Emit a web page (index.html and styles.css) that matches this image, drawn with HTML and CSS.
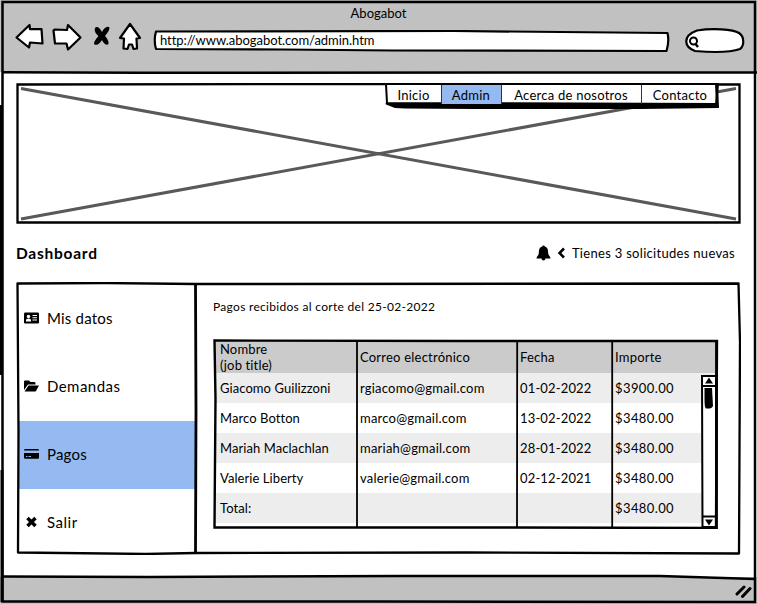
FILE: index.html
```html
<!DOCTYPE html>
<html lang="es">
<head>
<meta charset="utf-8">
<title>Abogabot</title>
<link rel="stylesheet" href="styles.css">
</head>
<body>
<div class="window">
  <header class="chrome">
    <div class="chrome-title">Abogabot</div>
    <div class="toolbar">
      <svg class="nav-icons" width="128" height="32" viewBox="14 21 128 32">
        <g fill="#fff" stroke="#000" stroke-width="2.2" stroke-linejoin="round" stroke-linecap="round">
          <path d="M16.500 37.500 L29.500 25 L30 29.200 L41.500 29 L42.500 43.500 L30 42.500 L29 47.500 Z"/>
          <path d="M53.500 30.500 L55 29.500 L67 30 L68 25 L80.500 37.500 L68 49.500 L66.500 43.500 L55 43.500 Z"/>
          <path d="M130 24 L140 38 L136.500 38.500 L137 48.500 L133.500 49 L132 44.500 L129 44.500 L127.500 49 L123.500 48.500 L124 38.500 L120 38 Z"/>
        </g>
        <path d="M95 28 C97 25.500 100 28 102 32 C104 28 107 25.500 109.500 27.500 C109.500 31 106.500 34 105 36 C107 38 109 41 108.500 44 C106 46.500 103 42 102 40 C100 43 97 46.500 94 44 C94 41 97 38 98.500 36 C96 34 94 31 95 28Z"/>
      </svg>
      <div class="address">
        <svg class="sketch" viewBox="0 0 516 23" fill="#fff" stroke="#000" stroke-width="2.200" stroke-linejoin="round"><path d="M2.500 1.500 L300 1 L514 3 Q516 11 513 21 L240 20.500 L130 19.500 L2.500 19 Q0 10 2.500 1.500Z"/></svg>
        <span>http://www.abogabot.com/admin.htm</span>
      </div>
      <svg class="search" width="61" height="27" viewBox="684 27 61 27" fill="#fff" stroke="#000" stroke-width="2.200">
        <path d="M697 30.500 C712 28 733 29 739 33 C745 37 744 46 740 49 C729 53 707 52 695 51 C684 47 682 36 697 30.500Z"/>
        <circle cx="693.500" cy="41" r="3.500" stroke-width="2"/><path d="M695.500 44 L698 47" stroke-width="2.400"/>
      </svg>
    </div>
  </header>

  <main class="page">
    <section class="hero">
      <svg class="sketch" viewBox="0 0 725 141" fill="none" stroke="#000" stroke-width="2.300">
        <path d="M5 5.500 L720 136 M5 136 L720 5.500" stroke="#595959" stroke-width="3"/>
        <path d="M1.500 1.500 L370 1 L723.500 1.500 L723.500 139.500 L1.500 139.500Z"/>
      </svg>
      <nav class="tabs">
        <svg class="sketch" viewBox="0 0 335 26">
          <path d="M1 1 L333 1 L331 21 L2 20Z" fill="#fff" stroke="#000" stroke-width="2"/>
          <path d="M0 20.500 L331 21 L330 1 L333 1 L334 25 L256 26 L90 26 L20 25.500 L10 25 L1 21.500Z"/>
        </svg>
        <a class="tab t-inicio">Inicio</a>
        <a class="tab t-admin active">Admin</a>
        <a class="tab t-acerca">Acerca de nosotros</a>
        <a class="tab t-contacto">Contacto</a>
      </nav>
    </section>

    <div class="heading">
      <h1>Dashboard</h1>
      <div class="notice">
        <svg width="15" height="16" viewBox="0 0 15 16"><path d="M6.200 1.500 C6.200 0 8.800 0 8.800 1.500 C12 2.500 12 5 12.200 8 C12.300 10.500 14.500 11.500 14.500 13.500 L9.500 13.500 C9.300 16 5.700 16 5.500 13.500 L.5 13.500 C.5 11.500 2.700 10.500 2.800 8 C3 5 3 2.500 6.200 1.500Z"/></svg>
        <svg class="chev" width="8" height="12" viewBox="0 0 8 12" fill="none" stroke="#000" stroke-width="2.500"><path d="M7 1.500 L2.500 6 L7 10.500"/></svg>
        <span>Tienes 3 solicitudes nuevas</span>
      </div>
    </div>

    <div class="panels">
      <svg class="sketch outline" viewBox="0 0 725 273" fill="none" stroke="#000" stroke-width="2.300" stroke-linejoin="round">
        <path d="M1.500 1.500 L90 1 L180 2 L250 2 L722.500 1.500 L724 60 L723 271.500 L450 270.500 L180 271 L130 272 L2 270.500 L2.500 150Z"/>
        <path d="M179.500 2 L180 130 L179.500 272" stroke-width="2.800"/>
      </svg>
      <ul class="menu">
        <li><svg width="15" height="12" viewBox="0 0 15 12"><rect y=".5" width="15" height="11" rx="1.200"/><path fill="#fff" d="M2 9.500 V8 Q2 6.500 4.500 6.500 Q7 6.500 7 8 V9.500Z M8.500 3H13V4H8.500Z M8.500 5.300H13V6.300H8.500Z M8.500 7.600H13V8.600H8.500Z"/><circle cx="4.500" cy="4.500" r="1.700" fill="#fff"/></svg><span>Mis datos</span></li>
        <li><svg width="15" height="12" viewBox="0 0 15 12"><path d="M0 1.500 Q0 .5 1 .5 H5 L6.500 2 H10.500 Q11.500 2 11.500 3.500 V4.500 H4 L0 10Z M4.500 5.500 H15 L12 11 Q11.700 11.500 11 11.500 H.5Z"/></svg><span class="w-demandas">Demandas</span></li>
        <li class="active"><svg width="15" height="12" viewBox="0 0 15 12"><path d="M1 1H14Q15 1 15 2.500H0Q0 1 1 1Z M0 5H15V9.500Q15 10.700 14 10.700H1Q0 10.700 0 9.500Z"/><path d="M2 8.500H3.500M4.500 8.500H7" stroke="#94baf1"/></svg><span>Pagos</span></li>
        <li><svg width="15" height="12" viewBox="0 0 15 12"><path d="M3.500 2 L11.500 10 M11.500 2 L3.500 10" stroke="#000" stroke-width="3.500"/></svg><span class="w-salir">Salir</span></li>
      </ul>
      <section class="payments">
        <p>Pagos recibidos al corte del 25-02-2022</p>
        <div class="grid">
          <div class="row head"><span class="two-line">Nombre<br>(job title)</span><span>Correo electrónico</span><span>Fecha</span><span>Importe</span></div>
          <div class="row odd"><span class="name">Giacomo Guilizzoni</span><span>rgiacomo@gmail.com</span><span class="date">01-02-2022</span><span class="amount">$3900.00</span></div>
          <div class="row"><span class="name">Marco Botton</span><span>marco@gmail.com</span><span class="date">13-02-2022</span><span class="amount">$3480.00</span></div>
          <div class="row odd"><span class="name">Mariah Maclachlan</span><span>mariah@gmail.com</span><span class="date">28-01-2022</span><span class="amount">$3480.00</span></div>
          <div class="row"><span class="name">Valerie Liberty</span><span>valerie@gmail.com</span><span class="date">02-12-2021</span><span class="amount">$3480.00</span></div>
          <div class="row odd"><span class="name">Total:</span><span></span><span></span><span class="amount">$3480.00</span></div>
          <svg class="sketch" viewBox="0 0 506 190" fill="none" stroke="#000" stroke-width="2.400">
            <path d="M489 37 H503 V188 H489.500Z" fill="#fff" stroke-width="2"/>
            <path d="M489 47 H504 M489 177.500 H504" stroke-width="2"/>
            <path d="M492 44.500 L496 38.500 L500 44.500Z M492 180.500 H500 L496 186.500Z" fill="#000" stroke="none"/>
            <path d="M491.500 49 L499 49 L500 67 Q499 70 493 69.500 Q491.500 69 491.500 60Z" fill="#000" stroke="none"/>
            <path d="M1.500 1.500 L250 2 L504 2 L503 189 L300 188.500 L1.500 188.500 L2.500 60Z"/>
            <path d="M503.500 2 V190" stroke-width="2.800"/>
            <path d="M144 2 V188 M304.200 2 L304 188 M399.200 2 V189" stroke-width="1.800"/>
          </svg>
        </div>
      </section>
    </div>
  </main>

  <footer class="status">
    <svg width="17" height="15" viewBox="0 0 17 15" stroke="#000" stroke-width="3" stroke-linecap="round"><path d="M2 10 L9 3 M7.500 12.500 L15 4.500"/></svg>
  </footer>
  <svg class="sketch" viewBox="0 0 757 604" fill="none" stroke="#000" stroke-width="2.500">
    <path d="M2.500 2 L755 2 L755 602 L380 601.500 L2.500 601.500Z"/>
    <path d="M2 72.300 L140 72.800 L757 72.500 M2 576.500 L150 577 L400 576 L660 576 L755 579"/>
    <path d="M1.500 105 V375 M2 470 V602" stroke-width="3"/>
  </svg>
</div>
</body>
</html>
```
FILE: styles.css
```css
* { box-sizing: border-box; }
body { margin: 0; background: #fff; color: #000; font: 13px/16px Lato, "Open Sans", sans-serif; letter-spacing: 0.3px; }
svg { display: block; flex: none; }
.sketch { position: absolute; inset: 0; width: 100%; height: 100%; pointer-events: none; }
.window { position: relative; width: 757px; height: 604px; display: flex; flex-direction: column; overflow: hidden; }
.chrome { height: 72px; flex: none; background: #c1c1c1; padding-top: 5px; }
.chrome-title { text-align: center; letter-spacing: 0; }
.toolbar { display: flex; padding-left: 14px; }
.nav-icons { margin-right: 11px; }
.address { position: relative; width: 517px; height: 23px; margin: 9px 14px 0 0; padding: 2px 0 0 7px; letter-spacing: -0.04px; }
.address span { position: relative; }
.search { margin-top: 6px; }
.page { flex: 1; padding: 11px 0 0 16px; }
.hero { position: relative; width: 725px; height: 141px; display: flex; justify-content: flex-end; padding-right: 21px; }
.tabs { position: relative; display: flex; width: 335px; height: 26px; padding: 2px 0 5px 2px; }
.tab { position: relative; display: flex; align-items: center; justify-content: center; padding: 1px 1px 0 0; border-right: 1.500px solid #333; letter-spacing: 0.25px; }
.t-inicio { width: 55px; }
.t-admin { width: 60px; }
.t-acerca { width: 140px; }
.t-contacto { width: 75px; border: 0; padding-left: 2px; }
.active { background: #94baf1; }
.heading { display: flex; justify-content: space-between; align-items: center; width: 719px; height: 58px; }
h1 { margin: 0; font-size: 15.500px; line-height: 20px; letter-spacing: 0.75px; }
.notice { display: flex; align-items: center; }
.chev { margin: 0 7px 0 6px; }
.panels { position: relative; width: 725px; height: 273px; display: flex; }
.outline { z-index: 1; }
.menu { list-style: none; margin: 0; padding: 3px 0 0 2px; width: 179px; font-size: 15px; }
.menu li { display: flex; align-items: center; gap: 8px; height: 68px; padding: 0 0 2px 6px; letter-spacing: 0.2px; }
.menu .w-demandas { letter-spacing: 0.45px; }
.menu .w-salir { letter-spacing: 0.5px; }
.payments { padding: 17px 0 0 18px; }
p { margin: 0 0 24px; font-size: 12px; }
.grid { position: relative; width: 506px; height: 190px; padding: 2px 2px 0; }
.row { display: grid; grid-template-columns: 140px 160px 95px 107px; height: 30px; align-items: center; padding-left: 5px; }
.row span { white-space: nowrap; letter-spacing: 0.22px; }
.row .name { letter-spacing: 0.07px; }
.row .two-line { letter-spacing: 0.15px; }
.row .date { letter-spacing: 0.15px; }
.row .amount { letter-spacing: 0.4px; }
.head { height: 32px; background: #cbcbcb; }
.odd { background: #ededed; }
.status { height: 27px; flex: none; background: #c1c1c1; display: flex; justify-content: flex-end; padding: 7px 5px 0 0; }
```
